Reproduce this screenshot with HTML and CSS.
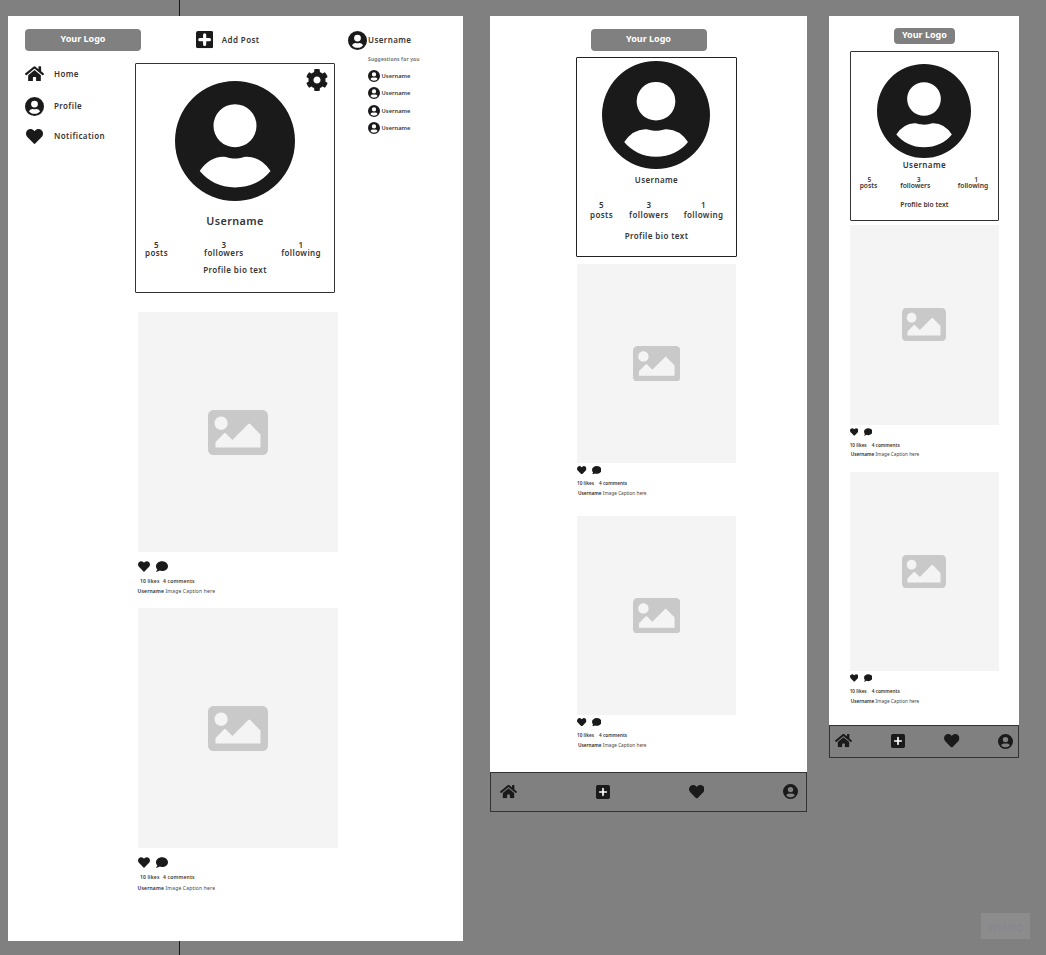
FILE: index.html
```html
<!DOCTYPE html>
<html lang="en">
<head>
<meta charset="utf-8">
<title>Profile page wireframes</title>
<link rel="stylesheet" href="styles.css">
</head>
<body>
<svg class="sprite" aria-hidden="true">
  <symbol id="user" viewBox="0 0 120 120"><path fill-rule="evenodd" d="M60 0a60 60 0 1 1 0 120a60 60 0 1 1 0-120zM60 23.2a21.5 21.5 0 1 0 0 43a21.5 21.5 0 1 0 0-43zM24.7 90Q34 76 48 75.7C52 75.7 54 77.5 60 77.5C66 77.5 68 75.7 72 75.7Q86.500 76 95.500 90C88 100 75 106.400 60 106.400C45 106.400 33 100 24.700 90z"/></symbol>
  <symbol id="home" viewBox="0 32 576 448"><path d="M280.370 148.260L96 300.110V464a16 16 0 0 0 16 16l112.060-.290a16 16 0 0 0 15.920-16V368a16 16 0 0 1 16-16h64a16 16 0 0 1 16 16v95.640a16 16 0 0 0 16 16.050L464 480a16 16 0 0 0 16-16V300L295.670 148.260a12.190 12.190 0 0 0-15.300 0zM571.600 251.470L488 182.560V44.050a12 12 0 0 0-12-12h-56a12 12 0 0 0-12 12v72.610L318.470 43a48 48 0 0 0-61 0L4.340 251.470a12 12 0 0 0-1.600 16.900l25.500 31A12 12 0 0 0 45.150 301l235.220-193.740a12.190 12.190 0 0 1 15.300 0L530.900 301a12 12 0 0 0 16.900-1.600l25.500-31a12 12 0 0 0-1.700-16.930z"/></symbol>
  <symbol id="heart" viewBox="0 32 512 448"><path d="M462.300 62.600C407.500 15.900 326 24.300 275.700 76.200L256 96.500l-19.700-20.300C186.100 24.300 104.500 15.900 49.700 62.600c-62.800 53.600-66.100 149.800-9.900 207.900l193.500 199.800c12.500 12.900 32.800 12.900 45.300 0l193.500-199.800c56.300-58.100 53-154.300-9.800-207.900z"/></symbol>
  <symbol id="comment" viewBox="0 32 512 448"><path d="M256 32C114.600 32 0 125.100 0 240c0 49.600 21.400 95 57 130.700C44.500 421.100 2.700 466 2.200 466.500c-2.200 2.300-2.800 5.700-1.500 8.700S4.800 480 8 480c66.300 0 116-31.800 140.600-51.400 32.700 12.300 69 19.400 107.400 19.400 141.400 0 256-93.100 256-208S397.400 32 256 32z"/></symbol>
  <symbol id="image" viewBox="0 64 512 384"><path d="M464 448H48c-26.510 0-48-21.490-48-48V112c0-26.510 21.490-48 48-48h416c26.510 0 48 21.490 48 48v288c0 26.510-21.490 48-48 48zM112 120c-30.928 0-56 25.072-56 56s25.072 56 56 56 56-25.072 56-56-25.072-56-56-56zM64 384h384V272l-87.515-87.515c-4.686-4.686-12.284-4.686-16.971 0L208 320l-55.515-55.515c-4.686-4.686-12.284-4.686-16.971 0L64 336v48z"/></symbol>
  <symbol id="cog" viewBox="8 8 496 496"><path d="M487.400 315.700l-42.600-24.600c4.300-23.200 4.300-47 0-70.200l42.600-24.600c4.900-2.800 7.100-8.600 5.500-14-11.100-35.600-30-67.800-54.700-94.600-3.800-4.100-10-5.100-14.800-2.300L380.800 110c-17.900-15.400-38.500-27.300-60.800-35.100V25.800c0-5.600-3.900-10.500-9.400-11.700-36.700-8.200-74.300-7.800-109.200 0-5.500 1.200-9.400 6.100-9.400 11.700V75c-22.200 7.900-42.800 19.800-60.800 35.100L88.700 85.500c-4.900-2.800-11-1.900-14.800 2.300-24.700 26.700-43.600 58.900-54.700 94.600-1.700 5.400.6 11.200 5.500 14L67.300 221c-4.300 23.200-4.300 47 0 70.200l-42.600 24.600c-4.900 2.800-7.100 8.600-5.500 14 11.100 35.600 30 67.800 54.700 94.600 3.800 4.100 10 5.100 14.800 2.300l42.600-24.600c17.900 15.400 38.500 27.300 60.800 35.100v49.200c0 5.600 3.900 10.500 9.400 11.700 36.700 8.200 74.300 7.800 109.200 0 5.500-1.200 9.400-6.100 9.400-11.700v-49.200c22.200-7.900 42.800-19.800 60.800-35.100l42.600 24.600c4.900 2.800 11 1.900 14.800-2.300 24.700-26.700 43.600-58.900 54.700-94.600 1.500-5.500-.7-11.300-5.600-14.100zM256 336c-44.100 0-80-35.900-80-80s35.900-80 80-80 80 35.900 80 80-35.900 80-80 80z"/></symbol>
  <symbol id="plus" viewBox="0 0 52 52"><rect width="52" height="52" rx="6"/><path d="M26 11.500v29M11.500 26h29" stroke="#fff" stroke-width="9.500" stroke-linecap="round" fill="none"/></symbol>
  <symbol id="plus-small" viewBox="0 0 42 42"><rect width="42" height="42" rx="5"/><path d="M21 11v20M11 21h20" stroke="#fff" stroke-width="5" stroke-linecap="round" fill="none"/></symbol>
</svg>

<div class="canvas">
  <div class="guide"></div>

  <section class="frame desktop">
    <header class="topbar">
      <div class="logo">Your Logo</div>
      <div class="top-item add"><svg class="ic-plus"><use href="#plus"/></svg><span>Add Post</span></div>
      <div class="top-item me"><svg class="ic-user"><use href="#user"/></svg><span>Username</span></div>
    </header>
    <div class="columns">
      <nav class="sidebar">
        <div class="side-item"><svg class="ic-home"><use href="#home"/></svg><span>Home</span></div>
        <div class="side-item"><svg class="ic-user"><use href="#user"/></svg><span>Profile</span></div>
        <div class="side-item"><svg class="ic-heart"><use href="#heart"/></svg><span>Notification</span></div>
      </nav>
      <main class="feed">
        <div class="card">
          <svg class="ic-cog"><use href="#cog"/></svg>
          <svg class="avatar"><use href="#user"/></svg>
          <div class="name">Username</div>
          <div class="stats">
            <div class="stat"><b>5</b><span>posts</span></div>
            <div class="stat"><b>3</b><span>followers</span></div>
            <div class="stat"><b>1</b><span>following</span></div>
          </div>
          <div class="bio">Profile bio text</div>
        </div>
        <article class="post">
          <div class="photo"><svg><use href="#image"/></svg></div>
          <div class="actions"><svg><use href="#heart"/></svg><svg><use href="#comment"/></svg></div>
          <div class="counts"><span>10 likes</span><span>4 comments</span></div>
          <div class="caption"><b>Username</b> <span>Image Caption here</span></div>
        </article>
        <article class="post">
          <div class="photo"><svg><use href="#image"/></svg></div>
          <div class="actions"><svg><use href="#heart"/></svg><svg><use href="#comment"/></svg></div>
          <div class="counts"><span>10 likes</span><span>4 comments</span></div>
          <div class="caption"><b>Username</b> <span>Image Caption here</span></div>
        </article>
      </main>
      <aside class="suggestions">
        <h2>Suggestions for you</h2>
        <div class="person"><svg><use href="#user"/></svg><span>Username</span></div>
        <div class="person"><svg><use href="#user"/></svg><span>Username</span></div>
        <div class="person"><svg><use href="#user"/></svg><span>Username</span></div>
        <div class="person"><svg><use href="#user"/></svg><span>Username</span></div>
      </aside>
    </div>
  </section>

  <section class="frame tablet">
    <div class="logo">Your Logo</div>
    <main class="feed">
      <div class="card">
        <svg class="avatar"><use href="#user"/></svg>
        <div class="name">Username</div>
        <div class="stats">
          <div class="stat"><b>5</b><span>posts</span></div>
          <div class="stat"><b>3</b><span>followers</span></div>
          <div class="stat"><b>1</b><span>following</span></div>
        </div>
        <div class="bio">Profile bio text</div>
      </div>
      <article class="post">
        <div class="photo"><svg><use href="#image"/></svg></div>
        <div class="actions"><svg><use href="#heart"/></svg><svg><use href="#comment"/></svg></div>
        <div class="counts"><span>10 likes</span><span>4 comments</span></div>
        <div class="caption"><b>Username</b> <span>Image Caption here</span></div>
      </article>
      <article class="post">
        <div class="photo"><svg><use href="#image"/></svg></div>
        <div class="actions"><svg><use href="#heart"/></svg><svg><use href="#comment"/></svg></div>
        <div class="counts"><span>10 likes</span><span>4 comments</span></div>
        <div class="caption"><b>Username</b> <span>Image Caption here</span></div>
      </article>
    </main>
    <nav class="tabbar">
      <svg class="ic-home"><use href="#home"/></svg>
      <svg class="ic-plus"><use href="#plus-small"/></svg>
      <svg class="ic-heart"><use href="#heart"/></svg>
      <svg class="ic-user"><use href="#user"/></svg>
    </nav>
  </section>

  <section class="frame mobile">
    <div class="logo">Your Logo</div>
    <main class="feed">
      <div class="card">
        <svg class="avatar"><use href="#user"/></svg>
        <div class="name">Username</div>
        <div class="stats">
          <div class="stat"><b>5</b><span>posts</span></div>
          <div class="stat"><b>3</b><span>followers</span></div>
          <div class="stat"><b>1</b><span>following</span></div>
        </div>
        <div class="bio">Profile bio text</div>
      </div>
      <article class="post">
        <div class="photo"><svg><use href="#image"/></svg></div>
        <div class="actions"><svg><use href="#heart"/></svg><svg><use href="#comment"/></svg></div>
        <div class="counts"><span>10 likes</span><span>4 comments</span></div>
        <div class="caption"><b>Username</b> <span>Image Caption here</span></div>
      </article>
      <article class="post">
        <div class="photo"><svg><use href="#image"/></svg></div>
        <div class="actions"><svg><use href="#heart"/></svg><svg><use href="#comment"/></svg></div>
        <div class="counts"><span>10 likes</span><span>4 comments</span></div>
        <div class="caption"><b>Username</b> <span>Image Caption here</span></div>
      </article>
    </main>
    <nav class="tabbar">
      <svg class="ic-home"><use href="#home"/></svg>
      <svg class="ic-plus"><use href="#plus-small"/></svg>
      <svg class="ic-heart"><use href="#heart"/></svg>
      <svg class="ic-user"><use href="#user"/></svg>
    </nav>
  </section>

  <div class="watermark">miro</div>
</div>
</body>
</html>
```
FILE: styles.css
```css
* { box-sizing: border-box; }
body { margin: 0; background: #808080; }
svg { display: block; flex: none; fill: #1a1a1a; }
.sprite { position: absolute; width: 0; height: 0; }

.canvas {
  position: relative;
  width: 1046px;
  height: 955px;
  overflow: hidden;
  background: #808080;
  color: #363636;
  font: 600 8px/10px "Noto Sans", sans-serif;
  letter-spacing: .4px;
  white-space: nowrap;
}
.guide { position: absolute; left: 179px; top: 0; width: 1px; height: 955px; background: #1a1a1a; }

/* Artboards on the free canvas */
.frame { position: absolute; top: 16px; background: #fff; }
.desktop { left: 7.5px; width: 455px; height: 925px; }
.tablet { left: 490px; width: 317px; height: 795.5px; }
.mobile { left: 829.4px; width: 190px; height: 742px; }

.logo {
  display: flex;
  justify-content: center;
  width: 116px;
  height: 22px;
  padding-top: 4.5px;
  border-radius: 4px;
  background: #808080;
  color: #fff;
  font-size: 9px;
  font-weight: 700;
  letter-spacing: 0;
}

/* Shared profile card */
.card {
  position: relative;
  display: flex;
  flex-direction: column;
  align-items: center;
  border: 1px solid #333;
  border-radius: 1px;
}
.stats { display: flex; align-self: stretch; }
.stat { display: flex; flex-direction: column; align-items: center; }
.stat b { font-weight: 600; }

/* Shared post */
.post { display: flex; flex-direction: column; font-size: 4.7px; line-height: 8px; letter-spacing: 0; }
.photo { display: flex; align-items: center; justify-content: center; background: #f4f4f4; }
.photo svg { fill: #c9c9c9; }
.actions, .counts { display: flex; }
.caption { color: #444; font-weight: 400; }
.caption b { color: #2a2a2a; font-weight: 600; }

/* Desktop */
.topbar { display: flex; height: 47px; padding: 13px 0 0 17.5px; }
.top-item { display: flex; align-items: center; height: 22px; }
.add { width: 152px; margin-left: 55px; gap: 8.5px; }
.add .ic-plus { width: 17.3px; height: 17.3px; }
.me { gap: 1px; }
.me .ic-user { width: 19px; height: 19px; }
.columns { display: flex; }
.sidebar { width: 127.5px; padding: 1px 0 0 17.5px; }
.side-item { display: flex; align-items: center; height: 20px; gap: 10px; margin-bottom: 12px; }
.side-item + .side-item { margin-bottom: 10px; }
.side-item svg { width: 19px; height: 19px; }
.side-item .ic-home { height: 15.5px; margin-top: -1px; }
.side-item .ic-heart { width: 17px; height: 15px; margin: 0 1px; }

.desktop .feed { width: 203px; }
.desktop .card { width: 200px; height: 229.5px; padding-top: 17px; }
.ic-cog { position: absolute; top: 4.5px; right: 6px; width: 22px; height: 22px; }
.desktop .avatar { width: 120px; height: 120px; }
.desktop .name { margin-top: 12.5px; font-size: 10.8px; line-height: 14px; }
.desktop .stats { margin-top: 13.5px; padding-left: 9px; line-height: 8px; }
.desktop .stat + .stat { margin-left: 36px; }
.desktop .stat:last-child { margin-left: 37.5px; }
.desktop .bio { margin-top: 8px; }
.desktop .post { width: 200px; height: 296px; margin-left: 3px; font-size: 5px; letter-spacing: .17px; }
.desktop .card + .post { margin-top: 19.5px; }
.desktop .post:last-child .caption { margin-top: 3px; }
.desktop .photo { height: 240px; }
.desktop .photo svg { width: 60px; height: 45px; }
.desktop .actions { gap: 6px; margin-top: 8.5px; }
.desktop .actions svg { width: 12px; height: 11px; }
.desktop .counts { gap: 3.5px; margin: 5px 0 0 2px; }
.desktop .caption { margin: 2px 0 0 -.5px; }

.suggestions { padding-left: 30px; font-size: 5.7px; letter-spacing: .05px; }
.suggestions h2 { margin: -9px 0 5.7px; color: #666; font-size: 5px; line-height: 10px; font-weight: 600; letter-spacing: .17px; }
.person { display: flex; align-items: center; gap: 1.5px; height: 12px; margin-bottom: 5.5px; }
.person svg { width: 12px; height: 12px; }

/* Tablet */
.tablet { display: flex; flex-direction: column; align-items: center; padding-top: 13px; }
.tablet .feed { width: 161px; height: 721px; margin: 6px 0 0 16px; }
.tablet .card { width: 161px; height: 200px; padding-top: 3px; border-color: #222; }
.tablet .avatar { width: 108px; height: 108px; margin-left: -.5px; }
.tablet .name { margin-top: 6px; }
.tablet .stats { margin-top: 15px; padding-left: 13px; }
.tablet .stat + .stat { margin-left: 16px; }
.tablet .stat:last-child { margin-left: 15px; }
.tablet .bio { margin-top: 11px; }
.tablet .post { width: 159px; height: 252px; margin-left: 1px; }
.tablet .card + .post { margin-top: 7px; }
.tablet .photo { height: 199.5px; }
.tablet .photo svg { width: 47.5px; height: 35.6px; }
.tablet .actions { gap: 5px; margin-top: 2.5px; }
.tablet .actions svg { width: 9.5px; height: 8.5px; }
.tablet .counts { gap: 5px; margin-top: 4.5px; }
.tablet .caption { margin: 2px 0 0 1px; }

.tabbar { display: flex; align-items: center; justify-content: space-between; align-self: stretch; border: 1px solid #333; background: #808080; }
.tabbar .ic-home { width: 17px; height: 13.3px; }
.tabbar .ic-plus { width: 14px; height: 14px; }
.tabbar .ic-heart { width: 15.5px; height: 13.5px; }
.tabbar .ic-user { width: 15px; height: 15px; }
.tablet .tabbar { height: 39.5px; margin-top: -.5px; padding: 0 8px 0 8.5px; }

/* Mobile */
.mobile { display: flex; flex-direction: column; align-items: center; padding-top: 11.5px; }
.mobile .logo { width: 60.5px; height: 16.5px; padding-top: 2.5px; }
.mobile .feed { width: 149.5px; height: 674px; margin-top: 7px; }
.mobile .card { width: 149.5px; height: 169.5px; padding-top: 11.5px; }
.mobile .avatar { width: 94px; height: 94px; }
.mobile .name { margin-top: 2.5px; }
.mobile .stats { margin-top: 6.5px; padding-left: 9px; font-size: 6.7px; line-height: 6.5px; letter-spacing: 0; }
.mobile .stat + .stat { margin-left: 23px; }
.mobile .stat:last-child { margin-left: 27.5px; }
.mobile .stat b { padding-left: 2px; }
.mobile .stat + .stat b { padding-left: 6.5px; }
.mobile .bio { margin-top: 10.5px; font-size: 6.75px; letter-spacing: 0; }
.mobile .post { width: 149px; height: 246.5px; }
.mobile .card + .post { margin-top: 4.5px; }
.mobile .photo { height: 199.5px; }
.mobile .photo svg { width: 44px; height: 33px; }
.mobile .actions { gap: 5.5px; margin-top: 3px; }
.mobile .actions svg { width: 8.5px; height: 8px; }
.mobile .counts { gap: 5px; margin-top: 5px; }
.mobile .caption { margin: 1.5px 0 0 1px; }
.mobile .tabbar { height: 33px; margin-top: -.5px; padding: 0 5px 0 5px; }

.watermark {
  position: absolute;
  left: 981px;
  top: 913px;
  width: 49px;
  height: 26px;
  background: #8c8c8d;
  color: #88888f;
  font-size: 15px;
  line-height: 26px;
  font-weight: 700;
  text-align: center;
}
```
